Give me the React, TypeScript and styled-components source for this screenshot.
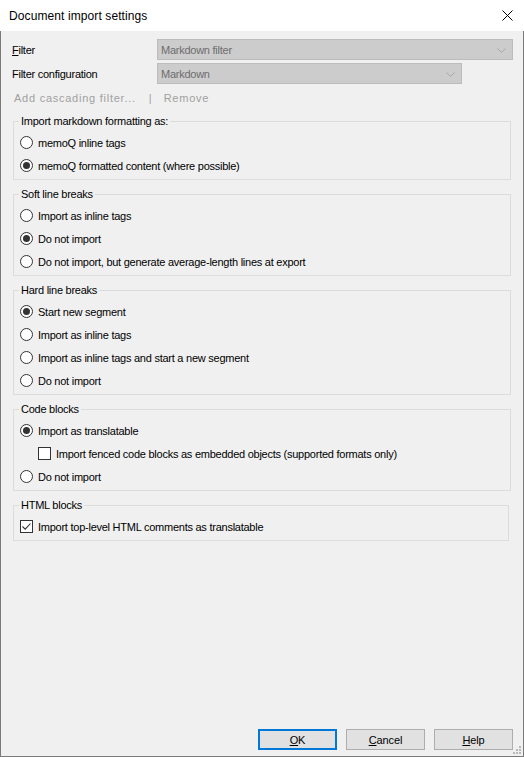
import React from "react";
import styled, { createGlobalStyle } from "styled-components";

const Global = createGlobalStyle`
  html, body { margin: 0; padding: 0; background: #ffffff; }
  body {
    font-family: "Liberation Sans", Arial, sans-serif;
    font-size: 11px;
    letter-spacing: -0.25px;
    color: #000;
  }
  * { box-sizing: border-box; }
`;

const Window = styled.div`
  position: relative;
  width: 524px;
  height: 757px;
  display: flex;
  flex-direction: column;
  background: #f0f0f0;
  border: 1px solid #7a7a7a;
  border-top: none;
`;

const TitleBar = styled.div`
  height: 31px;
  flex: none;
  display: flex;
  align-items: center;
  justify-content: space-between;
  background: #ffffff;
  margin: 0 -1px;
  padding: 0 11px 0 9px;
`;

const Title = styled.span`
  font-size: 12px;
  letter-spacing: 0.1px;
  color: #000;
`;

const Body = styled.div`
  flex: 1;
  display: flex;
  flex-direction: column;
  padding: 8px 12px 0 12px;
`;

const FieldRow = styled.div`
  display: grid;
  grid-template-columns: 145px 1fr;
  align-items: center;
  margin: 0 -2px 3px -1px;
`;

const FieldLabel = styled.span``;

const Combo = styled.div<{ $width?: number }>`
  position: relative;
  height: 21px;
  width: ${(p) => (p.$width ? `${p.$width}px` : "100%")};
  display: flex;
  align-items: center;
  padding-left: 3px;
  background: #cccccc;
  border: 1px solid #bcbcbc;
  color: #6d6d6d;
`;

const Chevron = styled.svg`
  position: absolute;
  right: 6px;
  top: 8px;
`;

const LinkRow = styled.div`
  display: flex;
  align-items: center;
  height: 16px;
  margin: 3px 0 0 1px;
  color: #a0a0a0;
  letter-spacing: 0.75px;
`;

const Sep = styled.span`
  margin: 0 12px 0 13px;
  letter-spacing: 0;
`;

const Group = styled.fieldset<{ $narrow?: boolean }>`
  margin: 6px ${(p) => (p.$narrow ? "2px" : "0")} 0 0;
  padding: 2px 0 2px 0;
  border: 1px solid #dcdcdc;
  min-width: 0;
  &:first-of-type {
    margin-top: 7px;
  }
`;

const Legend = styled.legend`
  margin-left: 5px;
  padding: 0 2px;
  line-height: 16px;
`;

const OptionRow = styled.div<{ $indent?: number }>`
  display: flex;
  align-items: center;
  height: 23px;
  gap: 5px;
  padding-left: ${(p) => p.$indent ?? 6}px;
`;

const RadioCircle = styled.span<{ $on?: boolean }>`
  width: 13px;
  height: 13px;
  flex: none;
  border-radius: 50%;
  border: 1px solid #333333;
  background: #ffffff;
  display: flex;
  align-items: center;
  justify-content: center;
  &::after {
    content: "";
    display: ${(p) => (p.$on ? "block" : "none")};
    width: 7px;
    height: 7px;
    border-radius: 50%;
    background: #333333;
  }
`;

const CheckBox = styled.span`
  width: 13px;
  height: 13px;
  flex: none;
  border: 1px solid #333333;
  background: #ffffff;
  display: flex;
  align-items: center;
  justify-content: center;
`;

const Footer = styled.div`
  margin: auto -2px 6px 0;
  display: flex;
  justify-content: flex-end;
  gap: 9px;
`;

const Button = styled.button<{ $primary?: boolean }>`
  width: 79px;
  height: 21px;
  padding: 0;
  font-family: inherit;
  font-size: 11px;
  letter-spacing: -0.1px;
  color: #000;
  background: #e1e1e1;
  border: ${(p) => (p.$primary ? "2px solid #0078d7" : "1px solid #adadad")};
`;

const Grip = styled.svg`
  position: absolute;
  right: 2px;
  bottom: 2px;
`;

const Radio = ({ on, children }: { on?: boolean; children: React.ReactNode }) => (
  <OptionRow>
    <RadioCircle $on={on} />
    <span>{children}</span>
  </OptionRow>
);

const Check = ({
  on,
  indent,
  children,
}: {
  on?: boolean;
  indent?: number;
  children: React.ReactNode;
}) => (
  <OptionRow $indent={indent}>
    <CheckBox>
      {on && (
        <svg width="11" height="11" viewBox="0 0 11 11">
          <path d="M1.5 5.5 L4.2 8.2 L9.5 2.5" fill="none" stroke="#333" strokeWidth="1.1" />
        </svg>
      )}
    </CheckBox>
    <span>{children}</span>
  </OptionRow>
);

const ChevronIcon = () => (
  <Chevron width="9" height="5" viewBox="0 0 9 5">
    <path d="M0.5 0.5 L4.5 4.5 L8.5 0.5" fill="none" stroke="#a6a6a6" strokeWidth="1" />
  </Chevron>
);

export default function App() {
  return (
    <>
      <Global />
      <Window>
        <TitleBar>
          <Title>Document import settings</Title>
          <svg width="11" height="11" viewBox="0 0 11 11">
            <path d="M0.5 0.5 L10.5 10.5 M10.5 0.5 L0.5 10.5" stroke="#000" strokeWidth="1" />
          </svg>
        </TitleBar>
        <Body>
          <FieldRow>
            <FieldLabel>
              <u>F</u>ilter
            </FieldLabel>
            <Combo>
              Markdown filter
              <ChevronIcon />
            </Combo>
          </FieldRow>
          <FieldRow>
            <FieldLabel>Filter configuration</FieldLabel>
            <Combo $width={305}>
              Markdown
              <ChevronIcon />
            </Combo>
          </FieldRow>
          <LinkRow>
            <span>Add cascading filter...</span>
            <Sep>|</Sep>
            <span>Remove</span>
          </LinkRow>

          <Group>
            <Legend>Import markdown formatting as:</Legend>
            <Radio>memoQ inline tags</Radio>
            <Radio on>memoQ formatted content (where possible)</Radio>
          </Group>

          <Group>
            <Legend>Soft line breaks</Legend>
            <Radio>Import as inline tags</Radio>
            <Radio on>Do not import</Radio>
            <Radio>Do not import, but generate average-length lines at export</Radio>
          </Group>

          <Group>
            <Legend>Hard line breaks</Legend>
            <Radio on>Start new segment</Radio>
            <Radio>Import as inline tags</Radio>
            <Radio>Import as inline tags and start a new segment</Radio>
            <Radio>Do not import</Radio>
          </Group>

          <Group>
            <Legend>Code blocks</Legend>
            <Radio on>Import as translatable</Radio>
            <Check indent={24}>
              Import fenced code blocks as embedded objects (supported formats only)
            </Check>
            <Radio>Do not import</Radio>
          </Group>

          <Group $narrow>
            <Legend>HTML blocks</Legend>
            <Check on>Import top-level HTML comments as translatable</Check>
          </Group>

          <Footer>
            <Button $primary>
              <u>O</u>K
            </Button>
            <Button>
              <u>C</u>ancel
            </Button>
            <Button>
              <u>H</u>elp
            </Button>
          </Footer>
        </Body>
        <Grip width="8" height="8" viewBox="0 0 8 8">
          <rect x="6" y="0" width="2" height="2" fill="#b8b8b8" />
          <rect x="3" y="3" width="2" height="2" fill="#b8b8b8" />
          <rect x="6" y="3" width="2" height="2" fill="#b8b8b8" />
          <rect x="0" y="6" width="2" height="2" fill="#b8b8b8" />
          <rect x="3" y="6" width="2" height="2" fill="#b8b8b8" />
          <rect x="6" y="6" width="2" height="2" fill="#b8b8b8" />
        </Grip>
      </Window>
    </>
  );
}
